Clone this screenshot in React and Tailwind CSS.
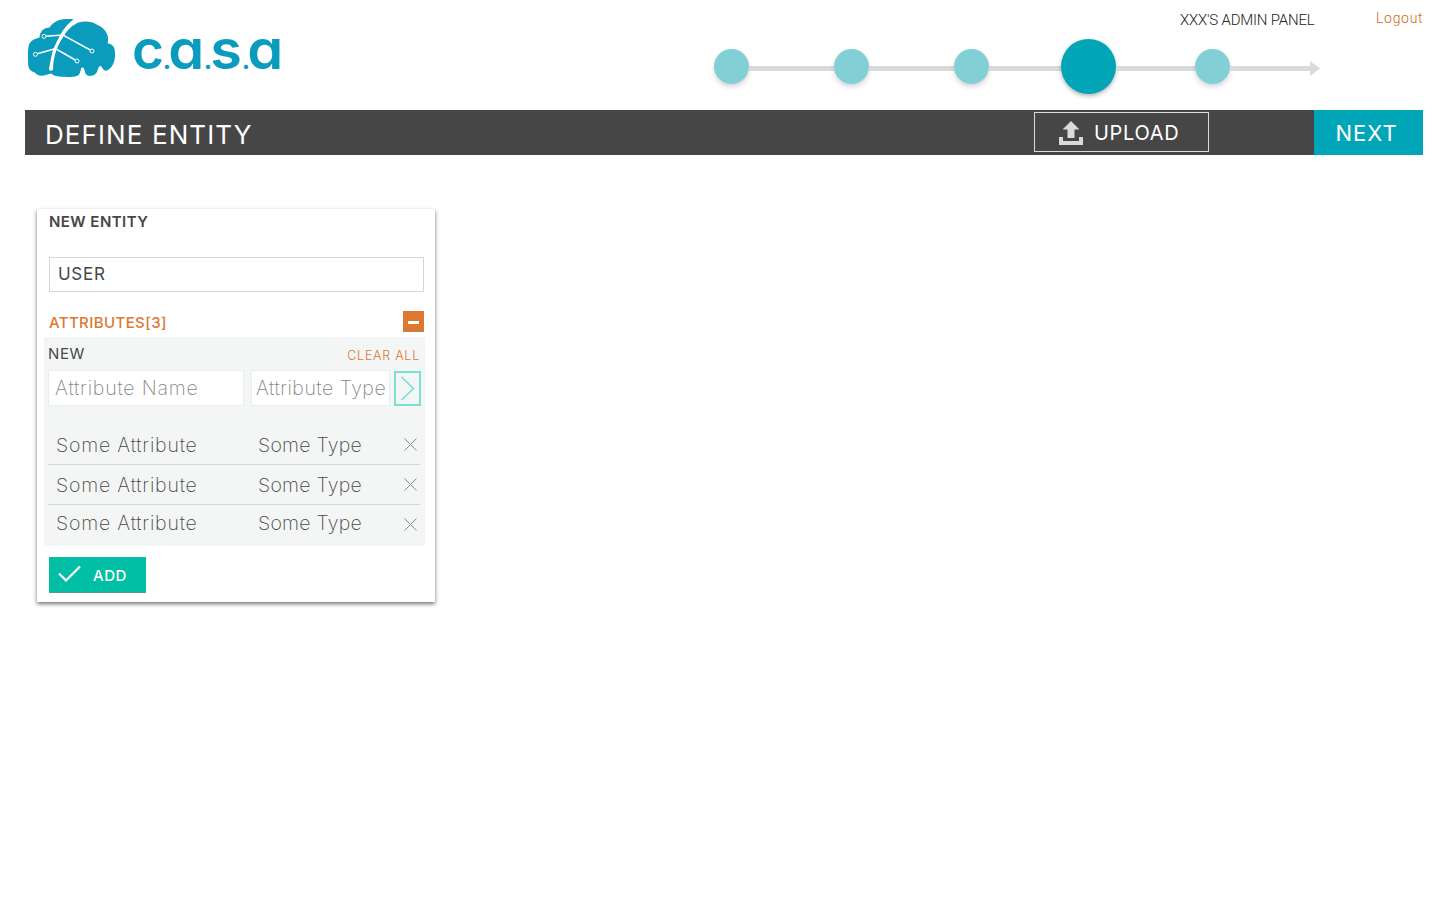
import React from "react";

const attributes = [
  { name: "Some Attribute", type: "Some Type" },
  { name: "Some Attribute", type: "Some Type" },
  { name: "Some Attribute", type: "Some Type" },
];

function BrainMark() {
  return (
    <svg className="h-[60px] w-[90px] shrink-0" viewBox="0 0 90 60">
      <path
        fill="#0a9bbd"
        d="M47 1.500C41 .5 34 1 30 3C26 5 24 7 22.500 9.500C17 9.500 13 13 12.500 19.500C6 21 2 24 1.500 29C.5 34 1 40 1.200 47C1.500 51 4 53.500 8 54.500C9 57 14 59 19 57C21 56.500 23 55.500 24.500 55.500C26 58 32 59 38 58.700C43 59.200 50 59 52 56.500C54 54 53.500 50 55 49.500C57.500 49 57.500 53 58.500 55.500C60 59 66 58.500 69 55.500C71 53 71 48.500 73 48C75.500 48 75.500 52.500 79 52.800C85 51 88.500 44 88 35C88 29 86 26.500 80.500 25.200C83 18 78 10 71 7.200C63 2 53 3 47.500 6.500Z"
      />
      <g fill="none" stroke="#fff">
        <path fill="#fff" stroke="none" d="M47 1.200C40 6 36 12 33 17.500C28.500 26 26 31 24.500 38C23.500 43 22.500 47 22 51.500Q24 54 26 51.500C26 45 27 39 29 33.500C31 27 34 22 37.500 17C40 12.500 43.500 9 48.500 6Z" />
        <path strokeWidth="1.500" d="M35.500 17L19 18.300M36.500 17.300L63.300 32M28 30.800L10.300 35.800M30 31.500L48.300 42" />
        <g fill="#0a9bbd" strokeWidth="1">
          <circle cx="17" cy="18.300" r="2" />
          <circle cx="8.400" cy="36.300" r="2" />
          <circle cx="65" cy="33" r="2" />
          <circle cx="50" cy="43" r="2" />
        </g>
      </g>
    </svg>
  );
}

function Logo() {
  return (
    <div className="flex items-start pl-[27px] pt-[18px]">
      <BrainMark />
      <div className="ml-[15px] mt-[-1px] flex items-baseline font-[Inter,sans-serif] text-[55px] font-semibold leading-[64px] text-[#0a9bbd] [font-feature-settings:'cv11'_1]">
        <span className="w-[31px]">c</span>
        <span className="w-[6px] text-[21px] font-black leading-5">.</span>
        <span className="w-[35px] scale-x-105">a</span>
        <span className="w-[7px] text-[21px] font-black leading-5">.</span>
        <span className="w-[31px] scale-x-105">s</span>
        <span className="w-[6px] text-[21px] font-black leading-5">.</span>
        <span className="w-[35px] scale-x-105">a</span>
      </div>
    </div>
  );
}

function Step() {
  return <span className="size-[35px] shrink-0 rounded-full bg-[#82cfd6] shadow-[0_3px_5px_rgba(0,0,0,0.16)]" />;
}

function Stepper() {
  return (
    <div className="mt-2 flex h-[55px] items-center">
      <Step />
      <span className="mt-1 h-[5px] w-[85px] bg-[#dadada]" />
      <Step />
      <span className="mt-1 h-[5px] w-[85px] bg-[#dadada]" />
      <Step />
      <span className="mt-1 h-[5px] w-[72px] bg-[#dadada]" />
      <span className="size-[55px] shrink-0 rounded-full bg-[#00a6b8] shadow-[0_2px_4px_rgba(0,0,0,0.3)]" />
      <span className="mt-1 h-[5px] w-[79px] bg-[#dadada]" />
      <Step />
      <span className="mt-1 h-[5px] w-[80px] bg-[#dadada]" />
      <svg className="mt-1 h-[15px] w-[10px]" viewBox="0 0 10 15">
        <path d="M0 0L10 7.500L0 15Z" fill="#dadada" />
      </svg>
    </div>
  );
}

function AttributeRow({ name, type, last }) {
  return (
    <div className={last ? "flex h-10 items-center" : "flex h-10 items-center border-b border-[#ccdada]"}>
      <span className={last ? "w-[202px] pb-1 pl-2 tracking-[0.8px]" : "w-[202px] pl-2 tracking-[0.8px]"}>{name}</span>
      <span className={last ? "w-[154px] pb-1 pl-2 tracking-[0.25px]" : "w-[154px] pl-2 tracking-[0.25px]"}>{type}</span>
      <svg className={last ? "mb-px size-[13px]" : "size-[13px]"} viewBox="0 0 13 13" fill="none" stroke="#8c8c8c" strokeWidth="1">
        <path d="M.5 .5L12.500 12.500M12.500 .5L.5 12.500" />
      </svg>
    </div>
  );
}

export default function App() {
  return (
    <div className="h-[900px] w-[1440px] overflow-hidden bg-white font-[Inter,sans-serif] text-[#464646]">
      <header className="flex h-[110px] justify-between">
        <Logo />
        <div className="w-[726px]">
          <div className="flex h-[31px] pr-[17px] font-[Roboto,sans-serif] leading-5">
            <span className="ml-auto w-[135px] whitespace-nowrap pt-[10px] text-[15px] font-light tracking-[-0.2px] text-[#222]">XXX'S ADMIN PANEL</span>
            <span className="ml-[61px] w-[47px] whitespace-nowrap pt-2 text-[14px] font-light tracking-[0.7px] text-[#d26714]">Logout</span>
          </div>
          <Stepper />
        </div>
      </header>

      <div className="ml-[25px] flex h-[45px] w-[1398px] bg-[#464646] text-white">
        <h1 className="pl-5 pt-1 text-[26px] font-normal leading-[41px] tracking-[1.1px]">DEFINE ENTITY</h1>
        <button className="ml-auto mr-[105px] mt-0.5 flex h-10 w-[175px] items-center border border-[#dadada] pl-6 pt-0.5 text-[20px] tracking-[0.7px]">
          <svg className="mr-[11px] h-6 w-6" viewBox="0 0 24 24" fill="#dadada">
            <path d="M12 0L20.500 8.500H15.500V17H8.500V8.500H3.500Z" />
            <path d="M0 16H4V20H20V16H24V24H0Z" />
          </svg>
          UPLOAD
        </button>
        <button className="w-[109px] bg-[#00a6b8] pl-[21.5px] pt-px text-left text-[22px] tracking-[1px]">NEXT</button>
      </div>

      <section className="ml-[37px] mt-[54px] h-[393px] w-[398px] bg-white pt-px shadow-[0_2px_4px_rgba(0,0,0,0.55)]">
        <h2 className="pl-3 text-[15px] font-semibold leading-6 tracking-[0.45px]">NEW ENTITY</h2>
        <div className="ml-3 mt-[23px] h-[35px] w-[375px] border border-[#d6d6d6] pl-2 text-[17px] leading-[32px] tracking-[0.7px]">USER</div>
        <div className="ml-3 mt-[19px] flex h-[26px] w-[375px] justify-between text-[15px] font-medium leading-6 tracking-[0.4px] text-[#dc7832]">
          <span>ATTRIBUTES[3]</span>
          <button className="flex size-[21px] items-center justify-center border-b border-[#b08060] bg-[#dc7832] pt-0.5">
            <span className="h-[3px] w-[11px] bg-white" />
          </button>
        </div>
        <div className="ml-[7px] h-[209px] w-[381px] bg-[#f4f6f6] pl-1">
          <div className="flex h-[33px] w-[372px] justify-between">
            <span className="text-[15px] leading-[34px] tracking-[0.6px]">NEW</span>
            <span className="text-[12.5px] font-light leading-[37px] tracking-[0.75px] text-[#dc7832]">CLEAR ALL</span>
          </div>
          <div className="flex h-[36px] text-[19.5px] font-extralight leading-[34px] text-[#858585]">
            <div className="mr-[7px] w-[196px] whitespace-nowrap border border-[#e9efef] bg-white pl-1.5 tracking-[0.8px]">Attribute Name</div>
            <div className="mr-1 w-[139px] whitespace-nowrap border border-[#e9efef] bg-white pl-1 tracking-[0.5px]">Attribute Type</div>
            <button className="mt-px flex h-[35px] w-[27px] items-center justify-center border-2 border-[#7be0d2]">
              <svg className="h-[25px] w-[15px]" viewBox="0 0 15 25" fill="none" stroke="#7be0d2" strokeWidth="1.700">
                <path d="M1.500 1L13.500 12.500L1.500 24" />
              </svg>
            </button>
          </div>
          <div className="mt-[19px] w-[372px] text-[19.5px] font-extralight leading-6">
            {attributes.map((item, index) => (
              <AttributeRow key={index} {...item} last={index === attributes.length - 1} />
            ))}
          </div>
        </div>
        <button className="ml-3 mt-[11px] flex h-9 w-[97px] items-center border-b border-[#649488] bg-[#00bfa5] pl-[9px] text-[15px] font-medium tracking-[0.5px] text-white">
          <svg className="mb-0.5 mr-3 h-[17px] w-[23px]" viewBox="0 0 23 17" fill="none" stroke="#fff" strokeWidth="2.200">
            <path d="M1 8.500L8 15.500L22 1.500" />
          </svg>
          <span className="pt-1">ADD</span>
        </button>
      </section>
    </div>
  );
}
